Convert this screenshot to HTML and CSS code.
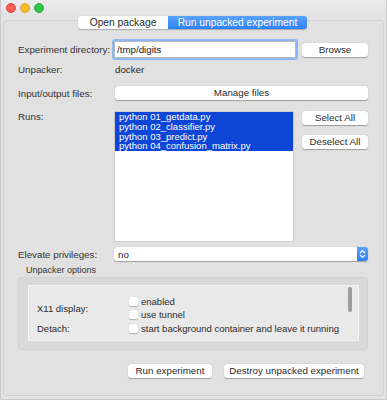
FILE: index.html
```html
<!DOCTYPE html>
<html lang="en">

<head>
    <meta charset="UTF-8">
    <title>ReproUnzip</title>
    <link rel="stylesheet" href="styles.css">
</head>

<body>
    <div class="window">
        <div class="titlebar">
            <span class="light red"></span>
            <span class="light yellow"></span>
            <span class="light green"></span>
        </div>
        <div class="tabs">
            <span class="tab">Open package</span>
            <span class="tab active">Run unpacked experiment</span>
        </div>
        <div class="panel">
            <div class="row row-dir">
                <label class="label">Experiment directory:</label>
                <input class="text-input" type="text" value="/tmp/digits">
                <button class="btn side">Browse</button>
            </div>
            <div class="row row-unpacker">
                <span class="label">Unpacker:</span>
                <span class="value">docker</span>
            </div>
            <div class="row row-files">
                <span class="label">Input/output files:</span>
                <button class="btn wide">Manage files</button>
            </div>
            <div class="row row-runs">
                <span class="label">Runs:</span>
                <ul class="runs">
                    <li class="sel">python 01_getdata.py</li>
                    <li class="sel">python 02_classifier.py</li>
                    <li class="sel">python 03_predict.py</li>
                    <li class="sel">python 04_confusion_matrix.py</li>
                </ul>
                <div class="run-btns">
                    <button class="btn side">Select All</button>
                    <button class="btn side">Deselect All</button>
                </div>
            </div>
            <div class="row row-elevate">
                <span class="label">Elevate privileges:</span>
                <div class="select">
                    <span>no</span>
                    <span class="arrows">
                        <svg width="7" height="10" viewBox="0 0 7 10">
                            <path d="M1 4 L3.5 1.5 L6 4 M1 6 L3.5 8.5 L6 6" fill="none" stroke="#fff" stroke-width="1.2"/>
                        </svg>
                    </span>
                </div>
            </div>
            <div class="group-title">Unpacker options</div>
            <div class="group">
                <div class="scroll">
                    <div class="opts">
                        <div class="opt">
                            <span class="opt-label">X11 display:</span>
                            <div class="checks">
                                <div class="check"><span class="box"></span>enabled</div>
                                <div class="check"><span class="box"></span>use tunnel</div>
                            </div>
                        </div>
                        <div class="opt">
                            <span class="opt-label">Detach:</span>
                            <div class="checks">
                                <div class="check"><span class="box"></span>start background container and leave it running</div>
                            </div>
                        </div>
                    </div>
                    <div class="scrollbar"><span class="thumb"></span></div>
                </div>
            </div>
            <div class="actions">
                <button class="btn">Run experiment</button>
                <button class="btn">Destroy unpacked experiment</button>
            </div>
        </div>
    </div>
</body>

</html>
```

FILE: styles.css
```css
body {
    margin: 0;
    padding: 0;
    font-family: "Liberation Sans", Arial, sans-serif;
    font-size: 9.75px;
    color: #2b2b2b;
    white-space: nowrap;
}

.window {
    width: 387px;
    height: 400px;
    background: #e4e4e4;
    overflow: hidden;
    box-sizing: border-box;
    border: 1px solid #c9c9c9;
    border-top: none;
}

.titlebar {
    height: 17px;
    background: linear-gradient(#ececec, #e2e2e2);
    display: flex;
    gap: 4px;
    padding: 3px 0 0 5px;
    box-sizing: border-box;
}

.light {
    width: 10px;
    height: 10px;
    border-radius: 50%;
    box-sizing: border-box;
}

.red {
    background: #fc5b57;
    border: 0.5px solid #e0443e;
}

.yellow {
    background: #fdbc2e;
    border: 0.5px solid #dea123;
}

.green {
    background: #33c748;
    border: 0.5px solid #27aa35;
}

.tabs {
    display: flex;
    margin: -1px 0 -9px 77px;
    position: relative;
    z-index: 2;
}

.tab {
    height: 13px;
    line-height: 13px;
    font-size: 10.25px;
    background: #fff;
    width: 90px;
    text-align: center;
    box-shadow: 0 0.5px 1px rgba(0, 0, 0, .25);
    border-radius: 3px 0 0 3px;
}

.tab.active {
    width: 139px;
    background: linear-gradient(#5aa2fb, #2c81f3);
    color: #fff;
    border-radius: 0 3px 3px 0;
}

.panel {
    margin: 0 2px 3px 2px;
    height: 376px;
    box-sizing: border-box;
    border: 1px solid #d2d2d2;
    border-radius: 3px;
    background: #e1e1e1;
    padding: 20px 15px 0 14px;
    display: flex;
    flex-direction: column;
}

.row {
    display: flex;
    align-items: center;
}

.label {
    width: 95px;
    flex-shrink: 0;
    color: #333;
}

.text-input {
    width: 182px;
    height: 17px;
    box-sizing: border-box;
    border: 1px solid #b9b9b9;
    outline: 2px solid #8ab8f3;
    outline-offset: 0;
    border-radius: 1px;
    font-family: inherit;
    font-size: 9.75px;
    padding: 0 2px;
    margin-left: 1px;
    color: #222;
}

.btn {
    height: 14px;
    padding: 0;
    box-sizing: border-box;
    border: none;
    border-radius: 3px;
    background: #fff;
    box-shadow: 0 0.5px 1px rgba(0, 0, 0, .3);
    font-family: inherit;
    font-size: 9.75px;
    color: #2b2b2b;
    line-height: 14px;
}

.btn.side {
    width: 66px;
    margin-left: auto;
}

.row-unpacker {
    margin-top: 6px;
}

.value {
    margin-left: 2px;
}

.row-files {
    margin-top: 11px;
}

.btn.wide {
    width: 256px;
    margin-left: 2px;
}

.row-runs {
    margin-top: 11px;
    align-items: flex-start;
}

.runs {
    list-style: none;
    margin: 0 0 0 1px;
    padding: 0;
    width: 180px;
    height: 131px;
    box-sizing: border-box;
    background: #fff;
    border: 1px solid #cdcdcd;
    font-size: 9.5px;
}

.runs li {
    height: 9.75px;
    line-height: 9.75px;
    padding-left: 4px;
}

.runs li.sel {
    background: #0d46d6;
    color: #fff;
}

.run-btns {
    margin-left: auto;
    display: flex;
    flex-direction: column;
    gap: 10px;
}

.row-elevate {
    margin-top: 5px;
}

.select {
    width: 257px;
    height: 14px;
    margin-left: 1px;
    background: #fff;
    border-radius: 3px;
    box-shadow: 0 0.5px 1px rgba(0, 0, 0, .3);
    display: flex;
    align-items: center;
    padding-left: 4px;
    box-sizing: border-box;
}

.arrows {
    margin-left: auto;
    width: 11px;
    height: 14px;
    border-radius: 0 3px 3px 0;
    background: linear-gradient(#5aa2fb, #2c81f3);
    display: flex;
    align-items: center;
    justify-content: center;
}

.group-title {
    font-size: 9px;
    margin: 4px 0 0 8px;
    color: #333;
}

.group {
    margin: 2px 0 0 0;
    height: 73px;
    box-sizing: border-box;
    background: #d9d9d9;
    border: 1px solid #d2d2d2;
    border-radius: 4px;
    padding: 7px 8px 8px 9px;
}

.scroll {
    height: 56px;
    box-sizing: border-box;
    background: #e9e9e9;
    border: 1px solid #f4f4f4;
    display: flex;
    font-size: 9.5px;
}

.opts {
    flex: 1;
    padding: 9px 0 0 8px;
}

.opt {
    display: flex;
    align-items: center;
    margin-bottom: 1px;
}

.opt-label {
    width: 92px;
}

.check {
    display: flex;
    align-items: center;
    height: 13px;
}

.box {
    width: 9px;
    height: 9px;
    background: #fff;
    border-radius: 2px;
    box-shadow: 0 0.5px 1px rgba(0, 0, 0, .25);
    margin-right: 3px;
}

.scrollbar {
    width: 10px;
    padding-top: 1px;
}

.thumb {
    display: block;
    width: 4px;
    height: 25px;
    border-radius: 2px;
    background: #9c9c9c;
}

.actions {
    display: flex;
    justify-content: flex-end;
    gap: 12px;
    margin-top: 14px;
    padding-right: 4px;
}

.actions .btn:first-child {
    width: 84px;
}

.actions .btn:last-child {
    width: 140px;
}
```
